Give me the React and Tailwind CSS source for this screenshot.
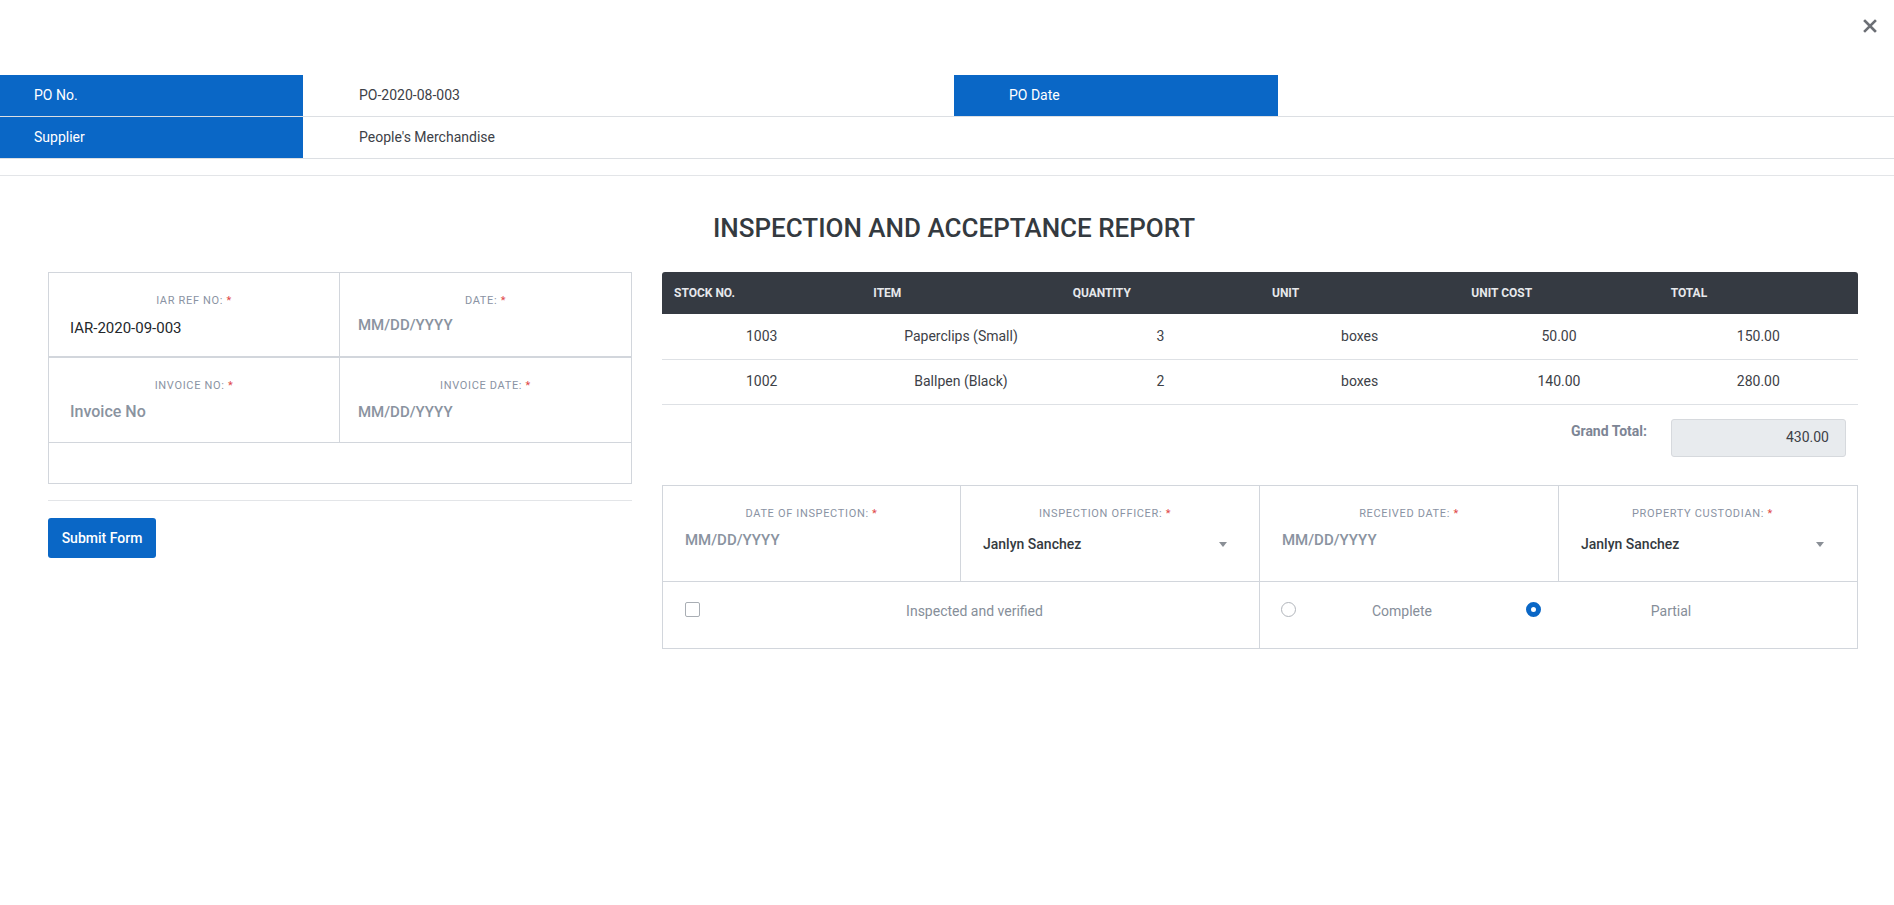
import React, { useState } from "react";

const items = [
  { stock: "1003", item: "Paperclips (Small)", qty: 3, unit: "boxes", cost: "50.00", total: "150.00" },
  { stock: "1002", item: "Ballpen (Black)", qty: 2, unit: "boxes", cost: "140.00", total: "280.00" },
];

const Label = ({ children }) => (
  <div className="text-center text-[11px] uppercase tracking-[0.06em] text-[#8a93a3] leading-none">
    {children} <span className="text-[#e04848]">*</span>
  </div>
);

const Caret = () => (
  <svg width="8" height="5" viewBox="0 0 8 5" className="text-[#8a8f96]">
    <path d="M0 0h8L4 5z" fill="currentColor" />
  </svg>
);

const App = () => {
  const [status, setStatus] = useState("partial");
  const [verified, setVerified] = useState(false);

  return (
    <div className="min-h-screen bg-white text-[#343a40] font-['Roboto','Liberation_Sans',sans-serif]">
      {/* close row */}
      <div className="h-[75px] flex justify-end items-start pt-[19px] pr-[17px]">
        <button className="text-[#6c6f75]">
          <svg width="14" height="14" viewBox="0 0 14 14">
            <path d="M2 2l10 10M12 2L2 12" stroke="currentColor" strokeWidth="2.6" strokeLinecap="square" />
          </svg>
        </button>
      </div>

      {/* PO info */}
      <div className="text-[14px]">
        <div className="flex h-[42px] border-b border-[#dcdfe3]">
          <div className="w-[303px] bg-[#0a67c6] text-white flex items-center pl-[34px]">PO No.</div>
          <div className="w-[651px] flex items-center pl-[56px] text-[#3d4147]">PO-2020-08-003</div>
          <div className="w-[324px] bg-[#0a67c6] text-white flex items-center pl-[55px]">PO Date</div>
          <div className="flex-1" />
        </div>
        <div className="flex h-[42px] border-b border-[#dcdfe3]">
          <div className="w-[303px] bg-[#0a67c6] text-white flex items-center pl-[34px]">Supplier</div>
          <div className="flex-1 flex items-center pl-[56px] text-[#3d4147]">People's Merchandise</div>
        </div>
        <div className="h-[17px] border-b border-[#e3e5e8]" />
      </div>

      <h1 className="text-center text-[26px] font-medium text-[#343a40] mt-[33px] leading-[38px] pl-[14px]">
        INSPECTION AND ACCEPTANCE REPORT
      </h1>

      <div className="flex gap-[30px] pl-[48px] pr-[36px] mt-[25px]">
        {/* left form */}
        <div className="w-[584px] shrink-0">
          <div className="grid grid-cols-2">
            <div className="h-[85px] border border-[#d2d6dc] pt-[22px] px-[21px]">
              <Label>IAR Ref No:</Label>
              <div className="mt-[11px] text-[15px] text-[#23272b]">IAR-2020-09-003</div>
            </div>
            <div className="h-[85px] border border-l-0 border-[#d2d6dc] pt-[22px] px-[18px]">
              <Label>Date:</Label>
              <div className="mt-[8px] text-[15px] font-medium text-[#8a93a0]">MM/DD/YYYY</div>
            </div>
            <div className="h-[86px] border border-[#d2d6dc] pt-[22px] px-[21px]">
              <Label>Invoice No:</Label>
              <div className="mt-[9px] text-[16px] font-medium text-[#8a93a0]">Invoice No</div>
            </div>
            <div className="h-[86px] border border-l-0 border-[#d2d6dc] pt-[22px] px-[18px]">
              <Label>Invoice Date:</Label>
              <div className="mt-[10px] text-[15px] font-medium text-[#8a93a0]">MM/DD/YYYY</div>
            </div>
          </div>
          <div className="h-[41px] border border-t-0 border-[#d2d6dc]" />
          <div className="mt-[16px] border-t border-[#e3e5e8]" />
          <button className="mt-[17px] h-[40px] w-[108px] rounded-[3px] bg-[#0a67c6] text-white text-[14px] font-medium">
            Submit Form
          </button>
        </div>

        {/* right side */}
        <div className="flex-1">
          <table className="w-full table-fixed text-[14px]">
            <thead>
              <tr className="bg-[#353a42] text-[#e6e8eb] h-[42px]">
                {["Stock No.", "Item", "Quantity", "Unit", "Unit Cost", "Total"].map((h, i) => (
                  <th
                    key={h}
                    className={`text-left pl-[12px] text-[12px] font-bold uppercase ${i === 0 ? "rounded-tl-[3px]" : ""} ${i === 5 ? "rounded-tr-[3px]" : ""}`}
                  >
                    {h}
                  </th>
                ))}
              </tr>
            </thead>
            <tbody className="text-[#3d4147]">
              {items.map((r) => (
                <tr key={r.stock} className="h-[45px] border-b border-[#dee1e5] text-center">
                  <td>{r.stock}</td>
                  <td>{r.item}</td>
                  <td>{r.qty}</td>
                  <td>{r.unit}</td>
                  <td>{r.cost}</td>
                  <td>{r.total}</td>
                </tr>
              ))}
            </tbody>
          </table>

          <div className="flex justify-end items-start gap-[24px] pr-[12px] mt-[14px]">
            <div className="text-[14px] font-bold text-[#7d8595] mt-[2px]">Grand Total:</div>
            <div className="w-[175px] h-[38px] rounded-[3px] border border-[#d6d9dd] bg-[#e8ebee] flex items-center justify-end pr-[16px] text-[14px] text-[#3d4147]">
              430.00
            </div>
          </div>

          <div className="mt-[28px] grid grid-cols-4">
            <div className="h-[97px] border border-[#d2d6dc] pt-[22px] px-[22px]">
              <Label>Date of Inspection:</Label>
              <div className="mt-[10px] text-[15px] font-medium text-[#8a93a0]">MM/DD/YYYY</div>
            </div>
            <div className="h-[97px] border border-l-0 border-[#d2d6dc] pt-[22px] pl-[22px] pr-[32px]">
              <Label>Inspection Officer:</Label>
              <div className="mt-[15px] flex items-center justify-between text-[14px] font-medium text-[#343a40]">
                Janlyn Sanchez
                <Caret />
              </div>
            </div>
            <div className="h-[97px] border border-l-0 border-[#d2d6dc] pt-[22px] px-[22px]">
              <Label>Received Date:</Label>
              <div className="mt-[10px] text-[15px] font-medium text-[#8a93a0]">MM/DD/YYYY</div>
            </div>
            <div className="h-[97px] border border-l-0 border-[#d2d6dc] pt-[22px] pl-[22px] pr-[33px]">
              <Label>Property Custodian:</Label>
              <div className="mt-[15px] flex items-center justify-between text-[14px] font-medium text-[#343a40]">
                Janlyn Sanchez
                <Caret />
              </div>
            </div>
          </div>
          <div className="grid grid-cols-2">
            <div className="h-[67px] border border-t-0 border-[#d2d6dc] flex items-start pt-[19px] pl-[22px] pr-[10px]">
              <button
                onClick={() => setVerified(!verified)}
                className="mt-[1px] w-[15px] h-[15px] rounded-[2px] border border-[#a9aeb4] bg-white shrink-0"
              />
              <div className="flex-1 text-center text-[14px] text-[#868e99]">Inspected and verified</div>
            </div>
            <div className="h-[67px] border border-t-0 border-l-0 border-[#d2d6dc] flex items-start pt-[19px] pl-[21px]">
              <button
                onClick={() => setStatus("complete")}
                className={`mt-[1px] w-[15px] h-[15px] rounded-full shrink-0 ${status === "complete" ? "border-[5px] border-[#0a67c6]" : "border border-[#b1b5bb]"}`}
              />
              <div className="w-[212px] text-center text-[14px] text-[#868e99]">Complete</div>
              <button
                onClick={() => setStatus("partial")}
                className={`ml-[18px] mt-[1px] w-[15px] h-[15px] rounded-full shrink-0 ${status === "partial" ? "border-[5px] border-[#0a67c6]" : "border border-[#b1b5bb]"}`}
              />
              <div className="flex-1 text-center text-[14px] text-[#868e99] pr-[56px]">Partial</div>
            </div>
          </div>
        </div>
      </div>
    </div>
  );
};

export default App;
